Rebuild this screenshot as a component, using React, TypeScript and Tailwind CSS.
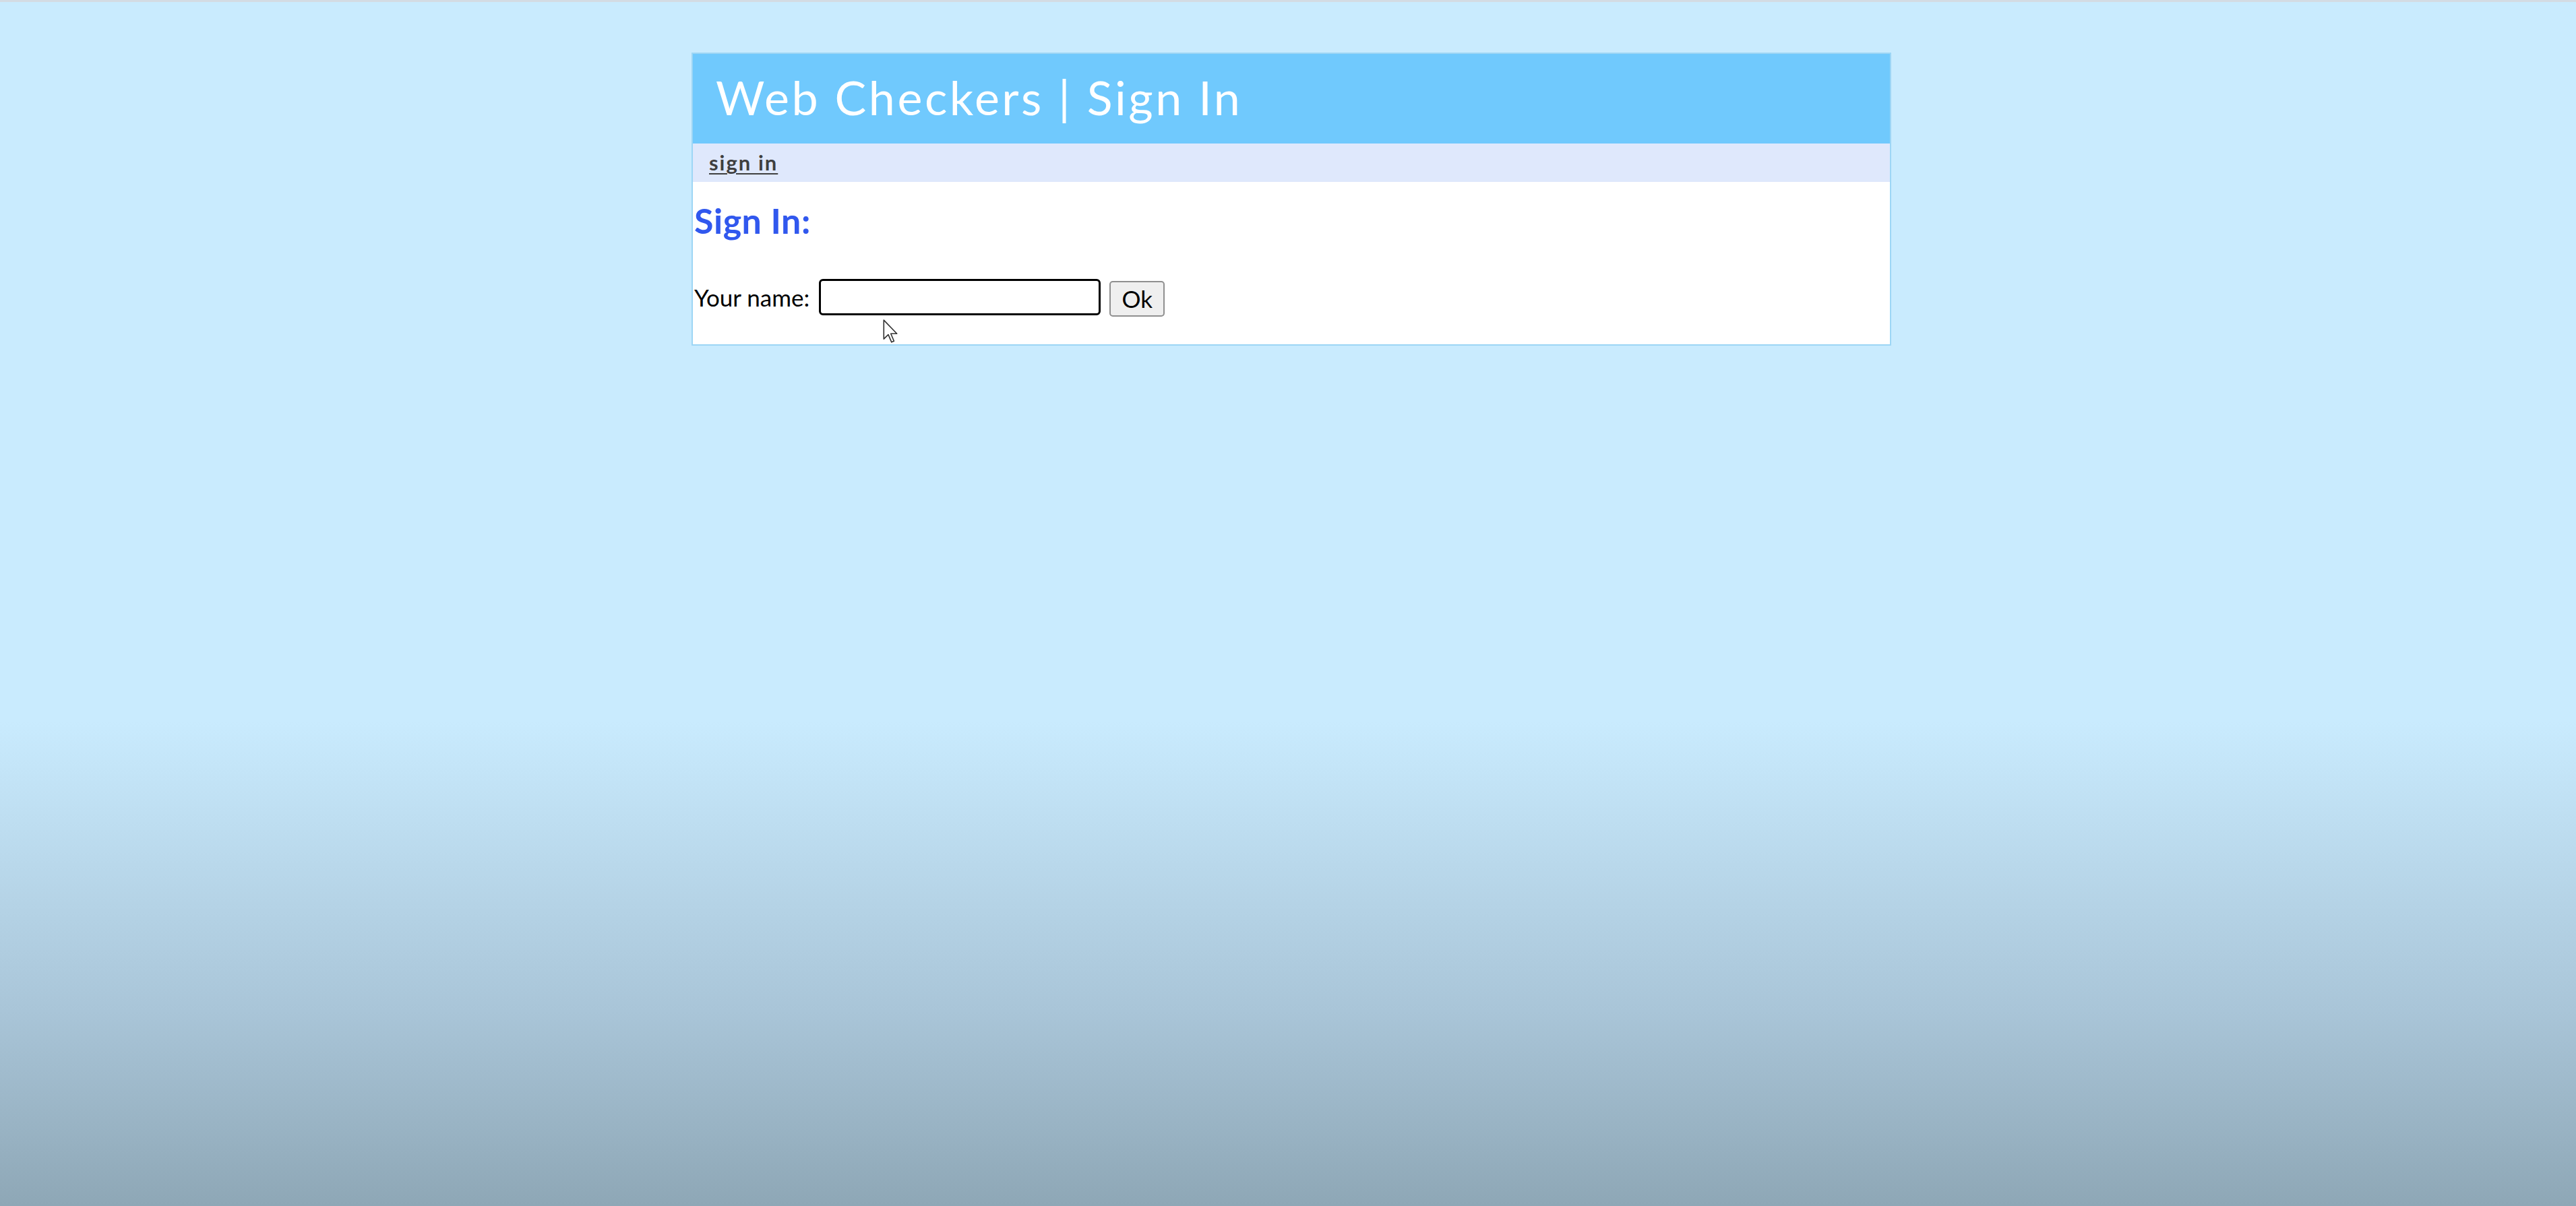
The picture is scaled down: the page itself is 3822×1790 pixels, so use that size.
import React from "react";

function Cursor() {
  return (
    <svg
      className="absolute left-[282px] top-[204px]"
      width="22"
      height="36"
      viewBox="0 0 12 20"
    >
      <path
        d="M0.6 0.6 L0.6 16.2 L4.3 12.6 L7 18.8 L9 17.9 L6.4 11.8 L11.4 11.8 Z"
        fill="#ffffff"
        stroke="#333333"
        strokeWidth="0.9"
        strokeLinejoin="round"
      />
    </svg>
  );
}

export default function App() {
  return (
    <div className="min-h-[1790px] w-full bg-[linear-gradient(to_bottom,#c9ebfe_0px,#c9ebfe_1070px,#a9c5d8_1500px,#8ea7b6_1790px)] font-['Lato','Open_Sans',sans-serif]">
      <div className="h-[3px] w-full bg-[#d3dbe3]" />
      <div className="ml-[1026px] mt-[75px] w-[1780px] border-2 border-[#9dd6f5] bg-white">
        <div className="flex h-[133px] items-center bg-[#70c9fd] pb-[6px] pl-[34px]">
          <h1 className="text-[70px] leading-none font-normal tracking-[3.5px] text-white">
            Web Checkers | Sign In
          </h1>
        </div>
        <div className="flex h-[57px] items-center bg-[#dfe8fc] pl-[24px]">
          <a
            href="#"
            className="text-[31px] font-bold tracking-[2px] text-[#3f3f3f] underline decoration-[2px] underline-offset-[4px]"
          >
            sign in
          </a>
        </div>
        <div className="relative pt-[26px] pb-[41px] pl-[2px]">
          <h2 className="text-[52px] leading-[1.2] font-bold tracking-[0.5px] text-[#3158ee]">
            Sign In:
          </h2>
          <form className="mt-[54px] flex items-center">
            <label className="text-[35px] leading-[1.2] text-black">Your name:</label>
            <input
              type="text"
              className="ml-[14px] h-[54px] w-[418px] rounded-[6px] border-[3px] border-black bg-white outline-none"
            />
            <button
              type="button"
              className="mt-[5px] ml-[13px] h-[53px] w-[82px] rounded-[5px] border-2 border-[#8f8f8f] bg-[#efefef] text-[35px] leading-none text-black"
            >
              Ok
            </button>
          </form>
          <Cursor />
        </div>
      </div>
    </div>
  );
}
